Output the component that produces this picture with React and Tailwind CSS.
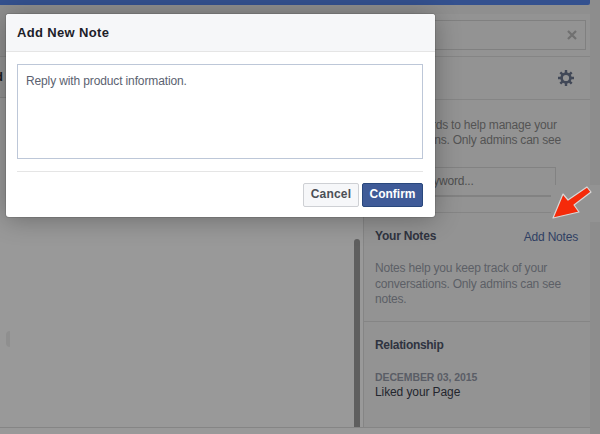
import React from "react";

const font = { fontFamily: '"Liberation Sans", Arial, sans-serif' };

function Gear() {
  return (
    <svg width="16" height="16" viewBox="0 0 16 16" fill="none" aria-hidden="true">
      <circle cx="8" cy="8" r="4.4" stroke="#414857" strokeWidth="2.6" />
      <g stroke="#414857" strokeWidth="2.4">
        <path d="M8 0v3M8 13v3M0 8h3M13 8h3M2.3 2.3l2.1 2.1M11.6 11.6l2.1 2.1M13.7 2.3l-2.1 2.1M4.4 11.6l-2.1 2.1" />
      </g>
    </svg>
  );
}

function Arrow() {
  return (
    <svg width="42" height="36" viewBox="0 0 42 36" aria-hidden="true">
      <path d="M36 2 L40 7 L23 20 L28 27 L2 33 L12 9 L17 15 Z" fill="#f52a0a" stroke="#d8d8d8" strokeWidth="1.2" strokeLinejoin="round" />
    </svg>
  );
}

export default function App() {
  return (
    <div style={font} className="relative flex h-[434px] w-[600px] overflow-hidden bg-[#8d8d8d] text-[12px] leading-[15.36px]">
      <div className="flex h-full w-[590px] shrink-0 flex-col">
        <div className="h-[5px] rounded-br-[2px] bg-[#34518f]" />
        <div className="h-[9px] bg-[#8f8f8f]" />
        <div className="flex min-h-0 flex-1">
          <div className="flex w-[363px] shrink-0 flex-col bg-[#999999]">
            <div className="h-[43px] bg-[#8f8f8f]" />
            <div className="flex h-[43px] items-center border-y border-[#858585] bg-[#939393] text-[13px] font-bold text-[#1a1d24]">
              <span className="-ml-[5px]">d</span>
            </div>
            <div className="flex flex-1 items-start justify-between pr-[3px]">
              <div className="ml-[6px] mt-[233px] h-[16px] w-[4px] rounded-l-full bg-[#8f8f8f]" />
              <div className="mt-[141px] h-[188px] w-[6px] rounded-t-[3px] bg-[#5f5f5f]" />
            </div>
          </div>
          <div className="flex w-[227px] shrink-0 flex-col border-l border-[#858585] bg-[#939393]">
            <div className="flex h-[43px] items-center border-b border-[#858585] pr-[4px]">
              <div className="ml-auto flex h-[30px] w-[220px] items-center justify-end border border-[#808080] bg-[#939393] pr-[8px]">
                <svg width="10" height="10" viewBox="0 0 10 10" aria-hidden="true">
                  <path d="M1 1l8 8M9 1l-8 8" stroke="#707070" strokeWidth="2.2" />
                </svg>
              </div>
            </div>
            <div className="flex h-[43px] items-center justify-end border-b border-[#858585] pr-[16px]">
              <Gear />
            </div>
            <div className="h-[113px] border-b border-[#858585] pl-[11px] pr-[10px] pt-[18px] tracking-[-0.2px] text-[#545454]">
              <p>Use keywords to help manage your</p>
              <p>conversations. Only admins can see</p>
              <div className="mt-[18px] flex h-[30px] w-[181px] items-center border border-b-2 border-[#828282] pl-[21px] text-[#4f4f4f]">
                Add keyword...
              </div>
            </div>
            <div className="h-[109px] border-b border-[#858585] pl-[11px] pr-[12px] pt-[16px] tracking-[-0.2px]">
              <div className="flex items-start justify-between">
                <span className="font-bold text-[#2f3340]">Your Notes</span>
                <span className="mt-[1px] text-[#2f3f63]">Add Notes</span>
              </div>
              <p className="mt-[16px] text-[#5c5f66]">
                Notes help you keep track of your
                <br />
                conversations. Only admins can see
                <br />
                notes.
              </p>
            </div>
            <div className="flex-1 pl-[11px] pt-[16px]">
              <div className="font-bold tracking-[-0.3px] text-[#2f3340]">Relationship</div>
              <div className="mt-[17px] text-[10.5px] font-bold leading-[15px] tracking-[-0.1px] text-[#5a5d66]">DECEMBER 03, 2015</div>
              <div className="tracking-[-0.1px] text-[#23262e]">Liked your Page</div>
            </div>
          </div>
        </div>
        <div className="h-[7px] border-t border-[#858585] bg-[#999999]" />
      </div>
      <div className="flex-1 bg-[#8d8d8d]" />

      <div className="absolute left-[6px] top-[14px] flex h-[203px] w-[429px] flex-col overflow-hidden rounded-[3px] bg-white shadow-[0_2px_26px_rgba(0,0,0,0.3),0_0_0_1px_rgba(0,0,0,0.1)]">
        <div className="flex h-[38px] shrink-0 items-center border-b border-[#e5e5e5] bg-[#f6f7f9] pl-[11px] text-[13px] font-bold tracking-[0.35px] text-[#1d2129]">
          Add New Note
        </div>
        <div className="flex flex-1 flex-col pl-[11px] pr-[12px] pt-[12px]">
          <div className="h-[95px] border border-[#bdc7d8] px-[8px] pt-[9px] tracking-[-0.13px] text-[#5b6270]">
            Reply with product information.
          </div>
          <div className="mt-[12px] border-t border-[#e5e5e5]" />
          <div className="mt-[11px] flex justify-end gap-[3px]">
            <div className="flex h-[24px] w-[56px] items-center justify-center rounded-[2px] border border-[#ced0d4] bg-[#f6f7f9] font-bold tracking-[0.2px] text-[#4b4f56]">
              Cancel
            </div>
            <div className="flex h-[24px] w-[61px] items-center justify-center rounded-[2px] border border-[#29487d] bg-[#3f5b98] font-bold text-white">
              Confirm
            </div>
          </div>
        </div>
      </div>

      <div className="absolute left-[551px] top-[185px] h-[37px] w-[49px] bg-[#939393]">
        <Arrow />
      </div>
    </div>
  );
}
